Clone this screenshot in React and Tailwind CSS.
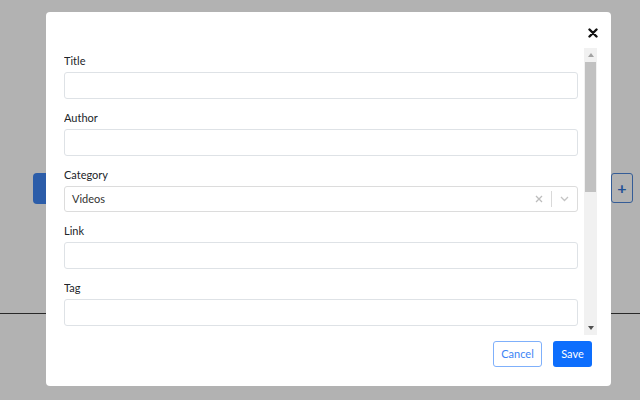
import React from "react";

const fields = ["Title", "Author", "Category", "Link", "Tag"];

function Field({ label, children }) {
  return (
    <div className="mb-[10px]">
      <label className="block h-[18px] mb-[2px] text-[11px] leading-[18px] text-[#212529]">
        {label}
      </label>
      {children}
    </div>
  );
}

function TextInput() {
  return (
    <input
      type="text"
      className="block w-full h-[27px] px-[8px] border border-[#dee2e6] rounded-[3px] bg-white text-[11px] outline-none"
    />
  );
}

function CategorySelect() {
  return (
    <div className="flex items-center w-full h-[26px] border border-[#dcdcdc] rounded-[3px] bg-white">
      <div className="flex-1 pl-[7px] text-[11px] text-[#333]">Videos</div>
      <div className="w-[25px] flex justify-center">
        <svg width="8" height="8" viewBox="0 0 8 8" fill="none" stroke="#bdbdbd" strokeWidth="1.3">
          <path d="M1 1L7 7M7 1L1 7" />
        </svg>
      </div>
      <div className="w-px h-[16px] bg-[#d9d9d9]" />
      <div className="w-[25px] flex justify-center">
        <svg width="9" height="6" viewBox="0 0 9 6" fill="none" stroke="#c4c4c4" strokeWidth="1.3">
          <path d="M1 1L4.5 4.5L8 1" />
        </svg>
      </div>
    </div>
  );
}

function ScrollBar() {
  return (
    <div className="w-[13px] h-full bg-[#f1f1f1] flex flex-col items-center">
      <div className="h-[14px] flex items-center justify-center">
        <svg width="6" height="4" viewBox="0 0 6 4">
          <path d="M0 4L3 0L6 4Z" fill="#a3a3a3" />
        </svg>
      </div>
      <div className="w-[11px] h-[130px] bg-[#c1c1c1]" />
      <div className="flex-1" />
      <div className="h-[14px] flex items-center justify-center">
        <svg width="6" height="4" viewBox="0 0 6 4">
          <path d="M0 0L6 0L3 4Z" fill="#505050" />
        </svg>
      </div>
    </div>
  );
}

export default function App() {
  return (
    <div className="relative w-[640px] h-[400px] bg-white overflow-hidden" style={{ fontFamily: "Lato, 'Liberation Sans', sans-serif" }}>
      {/* page behind the modal */}
      <div className="flex flex-col pt-[173px]">
        <div className="flex justify-between items-start pl-[33px] pr-[7px]">
          <button className="w-[100px] h-[31px] rounded-[4px] bg-[#3f86f2]" />
          <button className="w-[22px] h-[30px] rounded-[3px] border border-[#4c86d8] flex items-center justify-center text-[#2f73d6] font-bold text-[16px]">
            +
          </button>
        </div>
        <div className="mt-[109px] h-px bg-[#3a3a3a]" />
      </div>

      {/* overlay */}
      <div className="absolute inset-0 bg-black/30 pl-[46px] pt-[12px]">
        <div className="w-[565px] h-[374px] bg-white rounded-[4px] flex flex-col">
          <div className="h-[36px] flex justify-end items-start pt-[16px] pr-[13px]">
            <svg width="10" height="10" viewBox="0 0 10 10" stroke="#111" strokeWidth="2.4" strokeLinecap="round">
              <path d="M1.5 1.5L8.5 8.5M8.5 1.5L1.5 8.5" />
            </svg>
          </div>
          <div className="h-[287px] flex pl-[18px] pr-[14px]">
            <div className="flex-1 overflow-hidden pt-[4px] pr-[6px]">
              {fields.map((f) =>
                <Field key={f} label={f}>
                  {f === "Category" ? <CategorySelect /> : <TextInput />}
                </Field>
              )}
            </div>
            <ScrollBar />
          </div>
          <div className="flex justify-end gap-[11px] pt-[6px] pr-[19px]">
            <button className="w-[49px] h-[26px] rounded-[3px] border border-[#7fb0fb] text-[#3d84f5] text-[11px]">
              Cancel
            </button>
            <button className="w-[39px] h-[26px] rounded-[3px] bg-[#0d6efd] text-white text-[11px]">
              Save
            </button>
          </div>
        </div>
      </div>
    </div>
  );
}
